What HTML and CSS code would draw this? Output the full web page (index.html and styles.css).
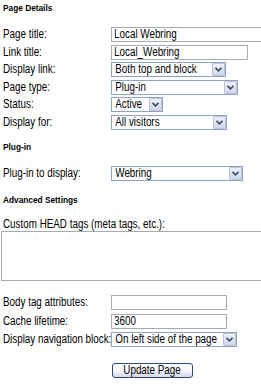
FILE: index.html
```html
<!DOCTYPE html>
<html>
<head>
<meta charset="utf-8">
<link rel="stylesheet" href="styles.css">
</head>
<body>
<form class="page">
  <h3 class="section-title first">Page Details</h3>
  <div class="fields">
    <div class="row"><label class="lbl"><span class="t">Page title:</span></label><div class="txt w-title"><input value="Local Webring"></div></div>
    <div class="row"><label class="lbl"><span class="t">Link title:</span></label><div class="txt w-link"><input value="Local_Webring"></div></div>
    <div class="row"><label class="lbl"><span class="t">Display link:</span></label>
      <div class="sel w-disp"><div class="clip"><select><option>Both top and block</option></select></div><span class="arrow"><svg width="7" height="5" viewBox="0 0 7 5"><path d="M0.5 0.8 L3.5 3.8 L6.5 0.8" fill="none" stroke="#3c4a6e" stroke-width="1.6"/></svg></span></div></div>
    <div class="row"><label class="lbl"><span class="t">Page type:</span></label>
      <div class="sel w-type"><div class="clip"><select><option>Plug-in</option></select></div><span class="arrow"><svg width="7" height="5" viewBox="0 0 7 5"><path d="M0.5 0.8 L3.5 3.8 L6.5 0.8" fill="none" stroke="#3c4a6e" stroke-width="1.6"/></svg></span></div></div>
    <div class="row"><label class="lbl"><span class="t">Status:</span></label>
      <div class="sel w-status"><div class="clip"><select><option>Active</option></select></div><span class="arrow"><svg width="7" height="5" viewBox="0 0 7 5"><path d="M0.5 0.8 L3.5 3.8 L6.5 0.8" fill="none" stroke="#3c4a6e" stroke-width="1.6"/></svg></span></div></div>
    <div class="row"><label class="lbl"><span class="t">Display for:</span></label>
      <div class="sel w-for"><div class="clip"><select><option>All visitors</option></select></div><span class="arrow"><svg width="7" height="5" viewBox="0 0 7 5"><path d="M0.5 0.8 L3.5 3.8 L6.5 0.8" fill="none" stroke="#3c4a6e" stroke-width="1.6"/></svg></span></div></div>
  </div>

  <h3 class="section-title plugin">Plug-in</h3>
  <div class="fields">
    <div class="row"><label class="lbl"><span class="t">Plug-in to display:</span></label>
      <div class="sel w-plugin"><div class="clip"><select><option>Webring</option></select></div><span class="arrow"><svg width="7" height="5" viewBox="0 0 7 5"><path d="M0.5 0.8 L3.5 3.8 L6.5 0.8" fill="none" stroke="#3c4a6e" stroke-width="1.6"/></svg></span></div></div>
  </div>

  <h3 class="section-title advanced">Advanced Settings</h3>
  <label class="lbl block"><span class="t">Custom HEAD tags (meta tags, etc.):</span></label>
  <textarea class="head-tags"></textarea>

  <div class="fields lower">
    <div class="row"><label class="lbl"><span class="t">Body tag attributes:</span></label><div class="txt w-body"><input value=""></div></div>
    <div class="row"><label class="lbl"><span class="t">Cache lifetime:</span></label><div class="txt w-body"><input value="3600"></div></div>
    <div class="row"><label class="lbl"><span class="t">Display navigation block:</span></label>
      <div class="sel w-nav"><div class="clip"><select><option>On left side of the page</option></select></div><span class="arrow"><svg width="7" height="5" viewBox="0 0 7 5"><path d="M0.5 0.8 L3.5 3.8 L6.5 0.8" fill="none" stroke="#3c4a6e" stroke-width="1.6"/></svg></span></div></div>
  </div>

  <div class="actions"><button type="button" class="btn"><span class="t">Update Page</span></button></div>
</form>
</body>
</html>
```

FILE: styles.css
```css
html, body {
  margin: 0;
  padding: 0;
  background: #fff;
  overflow: hidden;
}
body {
  font-family: "Liberation Sans", Arial, sans-serif;
  font-size: 12px;
  color: #000;
}
.page {
  box-sizing: border-box;
  padding: 3px 0 0 1px;
  width: 261px;
  overflow: hidden;
}
/* narrow text: the screenshot's labels are horizontally condensed */
.t {
  display: inline-block;
  transform: scaleX(0.82);
  transform-origin: 0 50%;
  white-space: nowrap;
}
.section-title {
  font-weight: bold;
  font-size: 8.3px;
  line-height: 10px;
  height: 10px;
  margin: 0 0 14px 0;
  padding-left: 2px;
  color: #000;
}
.section-title.plugin { margin-top: 12.5px; }
.section-title.advanced { margin-top: 14px; margin-bottom: 13px; }

.fields {
  display: flex;
  flex-direction: column;
  gap: 2.5px;
}
.fields.lower {
  margin-top: 14px;
  gap: 3.5px;
}
.row {
  display: flex;
  align-items: center;
  height: 15px;
}
.lbl {
  width: 108px;
  flex: none;
  padding-left: 2px;
  white-space: nowrap;
  line-height: 13px;
}
.lbl.block {
  display: block;
  width: auto;
  height: 13px;
}

.txt {
  box-sizing: border-box;
  height: 15px;
  border: 1px solid #a5acb2;
  background: #fff;
  overflow: hidden;
  flex: none;
}
.txt input {
  display: block;
  box-sizing: border-box;
  width: calc(100% / 0.82);
  height: 13px;
  border: 0;
  margin: 0;
  padding: 0 0 0 2.5px;
  font: inherit;
  line-height: 13px;
  color: #000;
  background: transparent;
  outline: none;
  transform: scaleX(0.82);
  transform-origin: 0 0;
}
.w-title { width: 165px; }
.w-link { width: 137px; }
.w-body { width: 116px; }

.sel {
  box-sizing: border-box;
  height: 15px;
  border: 1px solid #8ea3c4;
  background: #fff;
  display: flex;
  align-items: stretch;
  flex: none;
}
.clip {
  flex: 1;
  min-width: 0;
  overflow: hidden;
}
.sel select {
  appearance: none;
  -webkit-appearance: none;
  display: block;
  box-sizing: border-box;
  width: calc(100% / 0.82);
  height: 13px;
  border: 0;
  margin: 0;
  padding: 0 0 0 4px;
  font: inherit;
  line-height: 13px;
  color: #000;
  background: transparent;
  outline: none;
  transform: scaleX(0.82);
  transform-origin: 0 0;
}
.arrow {
  flex: none;
  box-sizing: border-box;
  width: 13px;
  border: 1px solid #b9c4dc;
  border-radius: 1px;
  background: linear-gradient(#eef1f8, #cfd6e8);
  display: flex;
  align-items: center;
  justify-content: center;
}
.w-disp { width: 115px; }
.w-type { width: 127px; }
.w-status { width: 52px; }
.w-for { width: 116px; }
.w-plugin { width: 132px; }
.w-nav { width: 126px; }

.head-tags {
  display: block;
  box-sizing: border-box;
  width: 262px;
  height: 50px;
  margin: 0;
  border: 1px solid #a5acb2;
  border-right: 0;
  resize: none;
  padding: 0;
  outline: none;
}

.actions {
  margin-top: 16px;
  padding-left: 111px;
}
.btn {
  box-sizing: border-box;
  width: 81px;
  height: 15px;
  padding: 0;
  margin: 0;
  border: 1px solid #284a86;
  border-radius: 3px;
  background: linear-gradient(#ffffff, #f4f4fa 55%, #d4d8ec);
  font: inherit;
  line-height: 13px;
  color: #000;
  text-align: center;
}
.btn .t {
  transform-origin: 50% 50%;
}
```
